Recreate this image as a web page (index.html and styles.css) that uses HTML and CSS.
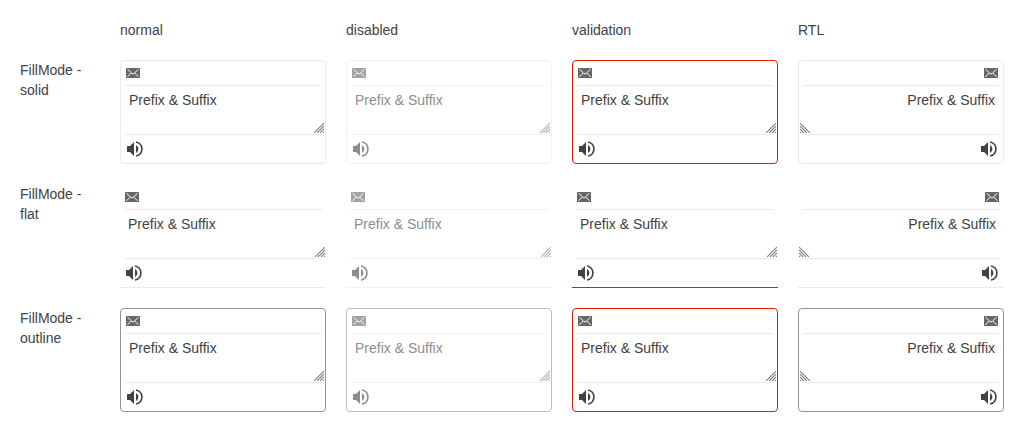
FILE: index.html
```
<!DOCTYPE html>
<html lang="en">
<head>
<meta charset="utf-8">
<title>TextArea fill modes</title>
<link rel="stylesheet" href="styles.css">
</head>
<body>
<svg class="defs" aria-hidden="true">
  <symbol id="mail" viewBox="0 0 14 10">
    <path fill="currentColor" d="M0 0h14v10H0z"/>
    <path fill="none" stroke="#fff" stroke-width="1" d="M1.500 1.200 5.500 5 7 6l1.500-1 4-3.800M1.500 8.800 5 5.200M12.500 8.800 9 5.200"/>
  </symbol>
  <symbol id="sound" viewBox="0 0 16 16">
    <path fill="currentColor" d="M0 5h3l4-4v14l-4-4H0zM9 4a4.500 4.500 0 0 1 0 8z"/>
    <path fill="none" stroke="currentColor" stroke-width="1.700" d="M9 1a7.100 7.100 0 0 1 0 14"/>
  </symbol>
  <symbol id="grip" viewBox="0 0 10 10">
    <path fill="none" stroke="currentColor" stroke-width="1.100" d="M0 10 10 0M3 10l7-7M6 10l4-4M9 10l1-1"/>
  </symbol>
</svg>
<main class="grid" id="grid">
  <span></span><span>normal</span><span>disabled</span><span>validation</span><span>RTL</span>
</main>
<script src="script.js"></script>
</body>
</html>
```
FILE: styles.css
```
body {
  margin: 0;
  font: 14px/20px "Liberation Sans", Arial, sans-serif;
  color: #424242;
  background: #fff;
}
.defs { display: none; }
.grid {
  display: grid;
  grid-template-columns: 80px repeat(4, minmax(0, 1fr));
  gap: 20px;
  padding: 20px;
}
.box {
  display: flex;
  flex-direction: column;
  border: 1px solid #ebebeb;
  border-radius: 4px;
}
.flat { border-width: 1px 0; border-top-color: transparent; border-radius: 0; }
.outline { border-color: #949494; }
.invalid { border-color: #e51a00; }
.flat.invalid { border-top-color: transparent; }
.disabled { opacity: 0.6; }
.prefix, .suffix { display: flex; align-items: center; }
.prefix { height: 24px; padding: 0 5px; }
.suffix { height: 28px; padding: 0 6px; }
.line { height: 1px; margin: 0 4px; background: #ebebeb; }
.mail { width: 14px; height: 10px; opacity: 0.8; }
.sound { width: 16px; height: 16px; }
.field { position: relative; }
.input {
  display: block;
  box-sizing: border-box;
  width: 100%;
  height: 48px;
  margin: 0;
  padding: 4px 8px;
  border: 0;
  outline: 0;
  background: none;
  color: inherit;
  font: inherit;
  overflow: hidden;
  resize: both;
}
.input::-webkit-resizer { background: transparent; }
.grip {
  position: absolute;
  inset-inline-end: 1px;
  bottom: 1px;
  width: 10px;
  height: 10px;
  color: #808080;
  pointer-events: none;
}
.rtl .grip { transform: scaleX(-1); }
```
FILE: script.js
```
const grid = document.getElementById("grid");
for (const fill of ["solid", "flat", "outline"]) {
  let html = `<span>FillMode - ${fill}</span>`;
  for (const state of ["normal", "disabled", "invalid", "rtl"]) {
    html += `<div class="box ${fill} ${state}"${state === "rtl" ? ' dir="rtl"' : ""}>
      <div class="prefix"><svg class="mail"><use href="#mail"/></svg></div>
      <div class="line"></div>
      <div class="field">
        <textarea class="input" aria-label="${fill} ${state}"${state === "disabled" ? " disabled" : ""}>Prefix &amp; Suffix</textarea>
        <svg class="grip" aria-hidden="true"><use href="#grip"/></svg>
      </div>
      <div class="line"></div>
      <div class="suffix"><svg class="sound"><use href="#sound"/></svg></div>
    </div>`;
  }
  grid.insertAdjacentHTML("beforeend", html);
}
```
